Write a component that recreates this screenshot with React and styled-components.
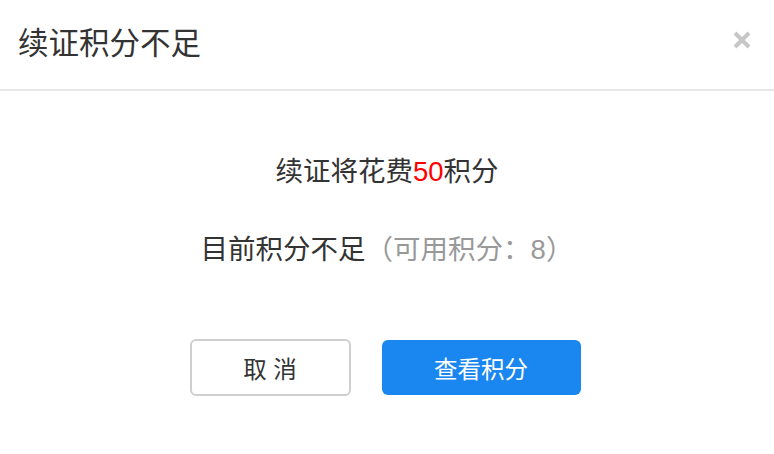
import React from "react";
import styled, { createGlobalStyle } from "styled-components";

const Global = createGlobalStyle`
  html, body { margin: 0; padding: 0; background: #fff; }
  body { font-family: "Liberation Sans", "Noto Sans CJK SC", sans-serif; color: #333; }
`;

const Dialog = styled.div`
  width: 774px;
  height: 454px;
  background: #fff;
  display: flex;
  flex-direction: column;
`;

const Header = styled.div`
  height: 89px;
  border-bottom: 2px solid #e6e6e6;
  display: flex;
  align-items: center;
  justify-content: space-between;
  padding: 0 22px 0 18px;
`;

const Title = styled.h1`
  margin: 0;
  font-size: 30.5px;
  font-weight: 400;
  color: #333;
  line-height: 1;
  padding-bottom: 3px;
`;

const Close = styled.button`
  border: 0;
  background: none;
  padding: 0;
  width: 20px;
  height: 20px;
  display: flex;
  cursor: pointer;
  margin-bottom: 10px;
`;

const Body = styled.div`
  display: flex;
  flex-direction: column;
  align-items: center;
  padding-top: 61px;
`;

const Line = styled.p`
  margin: 0 0 ${(p) => p.$gap}px;
  font-size: 27.5px;
  line-height: 40px;
  color: #333;
`;

const Red = styled.span`
  color: #ff0000;
`;

const Muted = styled.span`
  color: #999;
`;

const Actions = styled.div`
  display: flex;
  align-items: center;
  gap: 31px;
  margin-right: 4px;
`;

const Button = styled.button`
  font-family: inherit;
  font-size: 23.5px;
  height: ${(p) => (p.$primary ? 55 : 57)}px;
  width: ${(p) => (p.$primary ? 199 : 161)}px;
  border-radius: 6px;
  border: ${(p) => (p.$primary ? "none" : "2px solid #cfcfcf")};
  background: ${(p) => (p.$primary ? "#1a86f0" : "#fff")};
  color: ${(p) => (p.$primary ? "#fff" : "#333")};
  cursor: pointer;
  padding: 0;
`;

export default function App() {
  return (
    <>
      <Global />
      <Dialog>
        <Header>
          <Title>续证积分不足</Title>
          <Close aria-label="close">
            <svg width="20" height="20" viewBox="0 0 20 20">
              <path d="M3 3 L17 17 M17 3 L3 17" stroke="#c6c6c6" strokeWidth="4" strokeLinecap="butt" />
            </svg>
          </Close>
        </Header>
        <Body>
          <Line $gap={38}>
            续证将花费<Red>50</Red>积分
          </Line>
          <Line $gap={69}>
            目前积分不足<Muted>（可用积分：8）</Muted>
          </Line>
          <Actions>
            <Button>取&nbsp;消</Button>
            <Button $primary>查看积分</Button>
          </Actions>
        </Body>
      </Dialog>
    </>
  );
}
